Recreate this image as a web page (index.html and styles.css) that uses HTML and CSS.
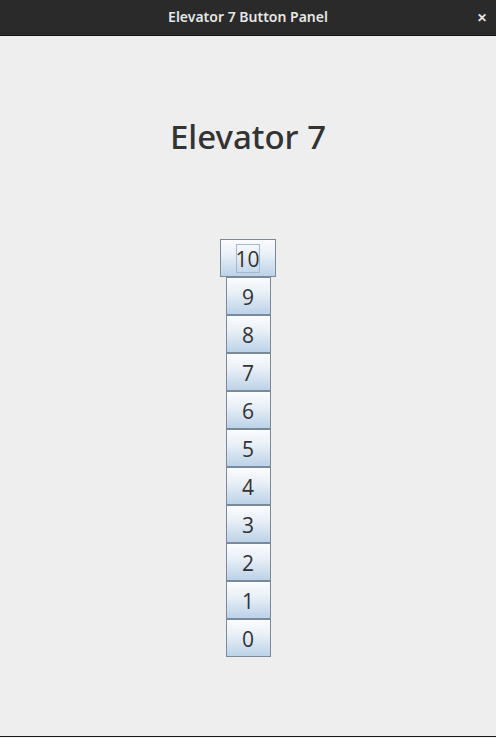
FILE: index.html
```html
<!DOCTYPE html>
<html>
<head>
<meta charset="utf-8">
<link rel="stylesheet" href="styles.css">
</head>
<body>
<div class="window">
  <div class="titlebar">
    <span class="title">Elevator 7 Button Panel</span>
    <span class="close">&#x2715;</span>
  </div>
  <div class="content">
    <h1 class="heading">Elevator 7</h1>
    <div class="panel">
      <button class="btn wide"><span class="focus">10</span></button>
      <button class="btn">9</button>
      <button class="btn">8</button>
      <button class="btn">7</button>
      <button class="btn">6</button>
      <button class="btn">5</button>
      <button class="btn">4</button>
      <button class="btn">3</button>
      <button class="btn">2</button>
      <button class="btn">1</button>
      <button class="btn">0</button>
    </div>
  </div>
  <div class="bottom"></div>
</div>
</body>
</html>
```
FILE: styles.css
```css
html, body {
  margin: 0;
  padding: 0;
  background: #8a8a8a;
}
.window {
  width: 496px;
  height: 738px;
  display: flex;
  flex-direction: column;
  background: #eeeeee;
}
.titlebar {
  height: 35px;
  background: #2a2a2a;
  border-bottom: 1px solid #121212;
  display: flex;
  align-items: center;
  justify-content: center;
  position: relative;
  font-family: "Noto Sans", "Open Sans", sans-serif;
  color: #e6e6e6;
}
.title {
  font-size: 14px;
  font-weight: 600;
  margin-top: -3px;
}
.close {
  position: absolute;
  right: 9px;
  top: 9px;
  font-size: 12px;
  font-weight: bold;
  color: #e8e8e8;
}
.content {
  flex: 1;
  display: flex;
  flex-direction: column;
  align-items: center;
}
.heading {
  margin: 81px 0 0 0;
  height: 40px;
  line-height: 40px;
  font-family: "Noto Sans", "Open Sans", sans-serif;
  font-weight: 500;
  font-size: 33px;
  color: #333333;
}
.panel {
  margin-top: 82px;
  display: flex;
  flex-direction: column;
  align-items: center;
}
.btn {
  box-sizing: border-box;
  width: 45px;
  height: 38px;
  margin: 0;
  padding: 1px 0 0 0;
  border: 1px solid #7a8a9b;
  background: linear-gradient(to bottom, #fbfcfe 0%, #e9f0f7 40%, #bcd2e8 100%);
  font-family: "Open Sans", "Noto Sans", sans-serif;
  font-size: 21px;
  color: #333333;
  display: flex;
  align-items: center;
  justify-content: center;
}
.btn.wide {
  width: 56px;
  margin-left: -1px;
}
.focus {
  box-sizing: border-box;
  width: 24px;
  height: 29px;
  border: 1px solid #a4b9cf;
  display: flex;
  align-items: center;
  justify-content: center;
}
.bottom {
  height: 1px;
  background: #1a1a1a;
  margin-bottom: 1px;
}
```
